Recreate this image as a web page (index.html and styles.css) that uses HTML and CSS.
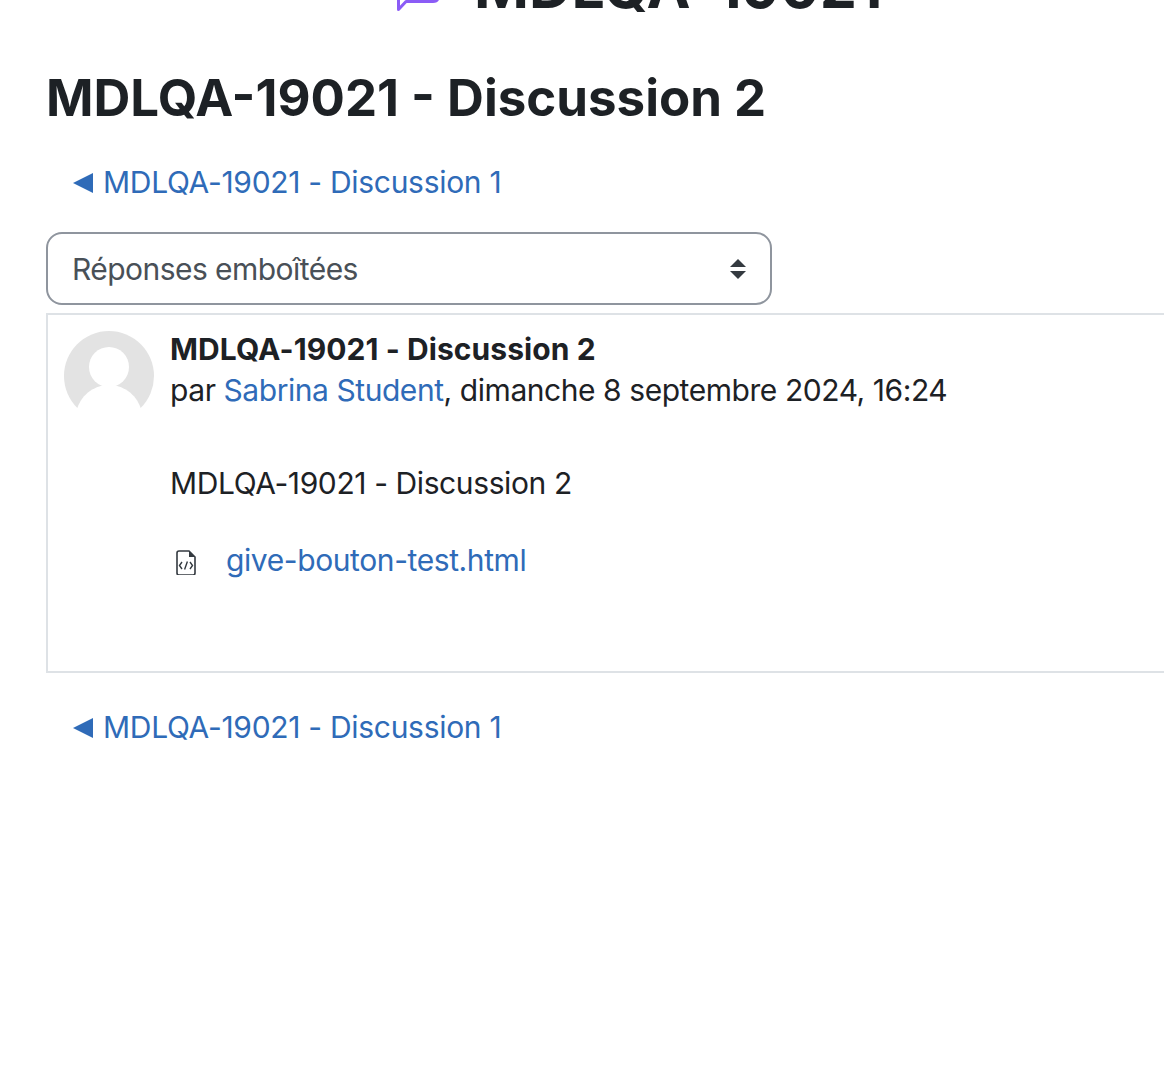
FILE: index.html
```html
<!DOCTYPE html>
<html>
<head>
    <title>MDLQA-19021 - Discussion 2</title>
    <link rel="stylesheet" href="styles.css">
</head>
<body>
    <div class="page-header">
        <svg class="forum-icon" width="50" height="14" viewBox="0 0 50 14">
            <path d="M3.5 -12V9.5L11 1.5H38C41 1.5 43 0 43 -3" fill="none" stroke="#8b5cf6" stroke-width="3" stroke-linejoin="round"/>
        </svg>
        <div class="page-title">MDLQA-19021</div>
    </div>

    <h2>MDLQA-19021 - Discussion 2</h2>

    <div class="nav-link"><a href="#"><span class="arrow"></span>MDLQA-19021 - Discussion 1</a></div>

    <div class="select-box">
        <span>Réponses emboîtées</span>
        <svg width="18" height="22" viewBox="0 0 18 22">
            <path d="M9 1L17 9H1Z M1 13H17L9 21Z" fill="#343a40"/>
        </svg>
    </div>

    <div class="post">
        <svg class="avatar" width="90" height="90" viewBox="0 0 90 90">
            <circle cx="45" cy="45" r="45" fill="#e3e3e3"/>
            <circle cx="45" cy="36" r="20" fill="#fff"/>
            <path d="M13 78C18 62 32 54 45 54C58 54 72 62 77 78V91H13Z" fill="#fff"/>
        </svg>
        <div class="post-body">
            <div class="post-subject">MDLQA-19021 - Discussion 2</div>
            <div class="post-meta">par <a href="#">Sabrina Student</a>, dimanche 8 septembre 2024, 16:24</div>
            <p class="post-text">MDLQA-19021 - Discussion 2</p>
            <div class="attachment">
                <svg width="22" height="28" viewBox="0 -2 22 28">
                    <path d="M4 2H14L20 8V24C20 25 19 26 18 26H4C3 26 2 25 2 24V4C2 3 3 2 4 2Z" fill="none" stroke="#343a40" stroke-width="1.6"/>
                    <path d="M14 2V8H20Z" fill="#343a40"/>
                    <path d="M7 13L4.5 16.5L7 20M15 13L17.5 16.5L15 20M12.4 12.5L9.6 20.5" fill="none" stroke="#343a40" stroke-width="1.4"/>
                </svg>
                <a href="#">give-bouton-test.html</a>
            </div>
        </div>
    </div>

    <div class="nav-link nav-bottom"><a href="#"><span class="arrow"></span>MDLQA-19021 - Discussion 1</a></div>
</body>
</html>
```

FILE: styles.css
```css
html, body {
    overflow-x: hidden;
}

body {
    font-family: 'Inter', sans-serif;
    font-size: 30px;
    letter-spacing: -0.4px;
    color: #1d2125;
    background: white;
    margin: 0;
    padding: 0 0 0 46px;
    height: 1084px;
    box-sizing: border-box;
    overflow: hidden;
}

a {
    color: #2f6bb8;
    text-decoration: none;
}

.page-header {
    display: flex;
    align-items: flex-start;
    height: 10px;
    margin-left: 349px;
    gap: 29px;
}

.forum-icon {
    flex: none;
}

.page-title {
    font-size: 59px;
    font-weight: 700;
    letter-spacing: 0;
    line-height: 68px;
    margin-top: -47px;
    white-space: nowrap;
}

h2 {
    font-size: 51px;
    font-weight: 700;
    letter-spacing: 0;
    line-height: 58px;
    margin: 59px 0 0;
}

.nav-link {
    letter-spacing: -0.3px;
    line-height: 36px;
    margin: 37px 0 0 27px;
}

.nav-bottom {
    margin-top: 36px;
}

.arrow {
    display: inline-block;
    width: 0;
    height: 0;
    border-style: solid;
    border-width: 10px 20px 10px 0;
    border-color: transparent #2f6bb8 transparent transparent;
    margin-right: 10px;
}

.select-box {
    display: flex;
    align-items: center;
    justify-content: space-between;
    width: 726px;
    height: 73px;
    box-sizing: border-box;
    margin-top: 32px;
    padding: 0 23px 0 24px;
    border: 2px solid #8f959e;
    border-radius: 16px;
    color: #495057;
    letter-spacing: -0.55px;
}

.post {
    display: flex;
    gap: 16px;
    width: 1200px;
    height: 360px;
    box-sizing: border-box;
    margin-top: 8px;
    padding: 16px;
    border: 2px solid #dee2e6;
}

.avatar {
    flex: none;
}

.post-body {
    line-height: 41px;
    margin-top: -2px;
}

.post-subject {
    font-weight: 700;
    letter-spacing: 0.08px;
}

.post-meta {
    letter-spacing: -0.44px;
}

.post-text {
    margin: 52px 0 0;
}

.attachment {
    display: flex;
    align-items: center;
    gap: 29px;
    margin-top: 36px;
    margin-left: 5px;
}
```
